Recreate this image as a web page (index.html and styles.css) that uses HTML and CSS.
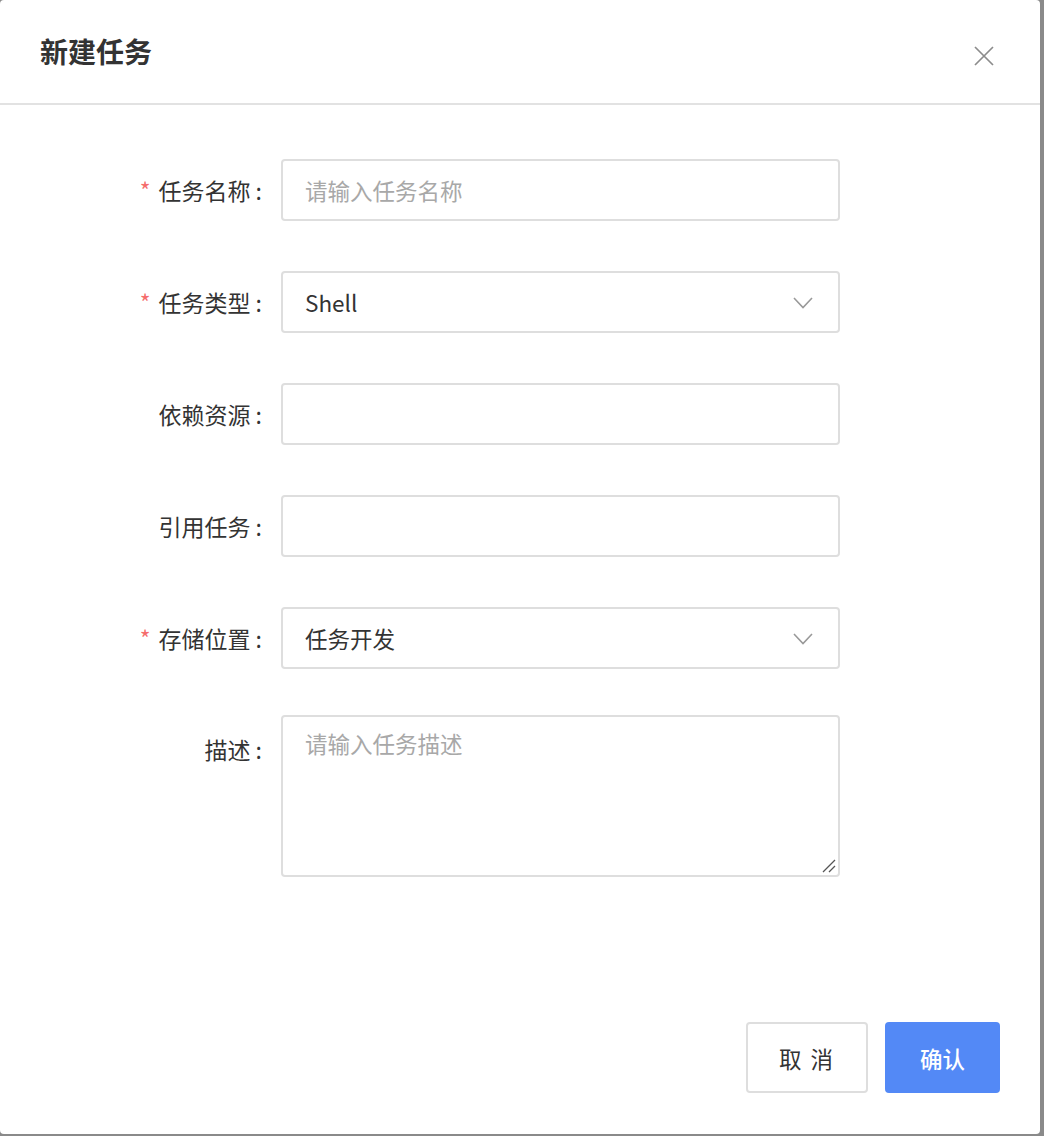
FILE: index.html
```html
<!DOCTYPE html>
<html lang="zh-CN">
<head>
    <meta charset="UTF-8">
    <meta name="viewport" content="width=device-width, initial-scale=1.0">
    <title>新建任务</title>
    <link rel="stylesheet" href="styles.css">
</head>
<body>
    <div class="dialog">
        <div class="dialog-header">
            <h2 class="dialog-title">新建任务</h2>
            <button class="dialog-close" aria-label="关闭">
                <svg width="20" height="20" viewBox="0 0 20 20">
                    <path d="M1 1 L19 19 M19 1 L1 19" stroke="#8c8c8c" stroke-width="1.7" fill="none"/>
                </svg>
            </button>
        </div>

        <form class="dialog-body">
            <div class="form-row">
                <label class="form-label required">任务名称<span class="colon">:</span></label>
                <input class="form-input" type="text" placeholder="请输入任务名称">
            </div>
            <div class="form-row">
                <label class="form-label required">任务类型<span class="colon">:</span></label>
                <div class="form-input form-select">
                    <span>Shell</span>
                    <svg class="arrow" width="20" height="12" viewBox="0 0 20 12">
                        <path d="M1 1 L10 10.5 L19 1" stroke="#999" stroke-width="1.6" fill="none"/>
                    </svg>
                </div>
            </div>
            <div class="form-row">
                <label class="form-label">依赖资源<span class="colon">:</span></label>
                <input class="form-input" type="text">
            </div>
            <div class="form-row">
                <label class="form-label">引用任务<span class="colon">:</span></label>
                <input class="form-input" type="text">
            </div>
            <div class="form-row">
                <label class="form-label required">存储位置<span class="colon">:</span></label>
                <div class="form-input form-select">
                    <span>任务开发</span>
                    <svg class="arrow" width="20" height="12" viewBox="0 0 20 12">
                        <path d="M1 1 L10 10.5 L19 1" stroke="#999" stroke-width="1.6" fill="none"/>
                    </svg>
                </div>
            </div>
            <div class="form-row form-row-top">
                <label class="form-label">描述<span class="colon">:</span></label>
                <div class="textarea-wrap">
                    <textarea class="form-input form-textarea" placeholder="请输入任务描述"></textarea>
                    <!-- resize handle -->
                    <svg class="resize-grip" width="14" height="14" viewBox="0 0 14 14">
                        <path d="M1 13 L13 1 M7 13 L13 7" stroke="#555" stroke-width="1.3" fill="none"/>
                    </svg>
                </div>
            </div>
        </form>

        <div class="dialog-footer">
            <button class="btn btn-default">取 消</button>
            <button class="btn btn-primary">确认</button>
        </div>
    </div>
</body>
</html>
```

FILE: styles.css
```css
* {
    margin: 0;
    padding: 0;
    box-sizing: border-box;
}

html, body {
    width: 100%;
    height: 100%;
}

body {
    background-color: #8a8a8a;
    font-family: "Noto Sans CJK SC", "Noto Sans", sans-serif;
    color: #333;
    overflow: hidden;
}

.dialog {
    width: 1040px;
    height: 1134px;
    background-color: #fff;
    border-radius: 4px;
    display: flex;
    flex-direction: column;
}

.dialog-header {
    height: 105px;
    padding: 0 40px;
    display: flex;
    align-items: center;
    justify-content: space-between;
    border-bottom: 2px solid #e2e2e2;
}

.dialog-title {
    font-size: 28px;
    font-weight: 700;
    color: #333;
    margin-top: -2px;
}

.dialog-close {
    background: none;
    border: none;
    cursor: pointer;
    width: 20px;
    height: 20px;
    margin-right: 6px;
    margin-top: 8px;
    display: flex;
}

.dialog-body {
    flex: 1;
    padding-top: 54px;
}

.form-row {
    display: flex;
    align-items: center;
    margin-bottom: 50px;
}

.form-row-top {
    align-items: flex-start;
    margin-top: -4px;
}

.form-label {
    width: 281px;
    padding-right: 19px;
    text-align: right;
    font-size: 23px;
    line-height: 32px;
    color: #333;
}

.form-row-top .form-label {
    padding-top: 18px;
}

.form-label.required::before {
    content: "*";
    color: #f56c6c;
    margin-right: 8px;
    font-size: 23px;
}

.colon {
    margin-left: 5px;
}

.form-input {
    width: 559px;
    height: 62px;
    border: 2px solid #dedede;
    border-radius: 4px;
    padding: 0 22px;
    font-family: inherit;
    font-size: 22.5px;
    color: #333;
    background-color: #fff;
    outline: none;
}

.form-input::placeholder {
    color: #a8a8a8;
}

.form-select {
    display: flex;
    align-items: center;
    justify-content: space-between;
}

.form-select .arrow {
    margin-right: 3px;
    margin-top: 2px;
}

.textarea-wrap {
    position: relative;
    display: flex;
}

.form-textarea {
    height: 162px;
    padding: 10px 22px;
    line-height: 32px;
    resize: none;
}

.resize-grip {
    position: absolute;
    right: 4px;
    bottom: 4px;
}

.dialog-footer {
    display: flex;
    justify-content: flex-end;
    gap: 17px;
    padding: 0 40px 41px 0;
}

.btn {
    height: 71px;
    font-family: inherit;
    font-size: 22.5px;
    border-radius: 4px;
    cursor: pointer;
}

.btn-default {
    width: 122px;
    background-color: #fff;
    border: 2px solid #dedede;
    color: #333;
    letter-spacing: 2px;
}

.btn-primary {
    width: 115px;
    background-color: #5389f6;
    border: none;
    color: #fff;
    font-weight: 500;
}
```
